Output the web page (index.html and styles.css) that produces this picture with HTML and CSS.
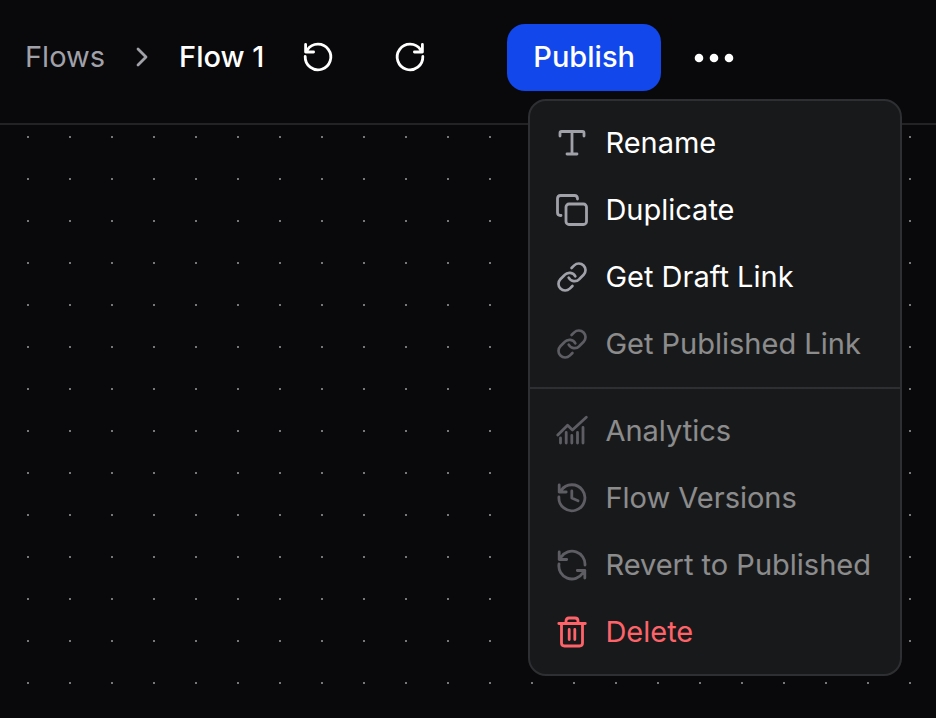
FILE: index.html
```html
<!DOCTYPE html>
<html lang="en">

<head>
  <meta charset="UTF-8">
  <meta name="viewport" content="width=device-width, initial-scale=1.0">
  <title>Flow 1</title>
  <link rel="stylesheet" href="styles.css">
</head>

<body>
  <header class="topbar">
    <nav class="breadcrumb" aria-label="Breadcrumb">
      <a class="crumb" href="#">Flows</a>
      <svg class="chevron" viewBox="0 0 32 32"><path d="M12 8l8 8-8 8"/></svg>
      <a class="crumb crumb-current" href="#" aria-current="page">Flow 1</a>
    </nav>
    <div class="history">
      <button class="icon-btn" type="button" aria-label="Undo">
        <svg class="icon" viewBox="0 0 32 32"><path d="M3.200 15.500a12.800 12.800 0 1 0 2.200-6.700L3.600 11M3.600 3.500V11h8"/></svg>
      </button>
      <button class="icon-btn" type="button" aria-label="Redo">
        <svg class="icon" viewBox="0 0 32 32"><path d="M28.800 15.500a12.800 12.800 0 1 1-2.200-6.700L28.400 11M28.400 3.500V11h-8"/></svg>
      </button>
    </div>
    <button class="publish" type="button">Publish</button>
    <div class="more">
      <button class="more-btn" type="button" aria-label="More" aria-haspopup="menu" aria-expanded="true">
        <svg class="dots" viewBox="0 0 40 10"><circle cx="5" cy="5" r="4.3"/><circle cx="20" cy="5" r="4.3"/><circle cx="35" cy="5" r="4.3"/></svg>
      </button>
      <div class="menu" role="menu">
        <div class="menu-section">
          <button class="menu-item" type="button" role="menuitem">
            <svg class="icon" viewBox="0 0 32 32"><path d="M4 9V6q0-1.500 1.500-1.500h21Q28 4.500 28 6v3M16 4.500V27M11 27h10"/></svg>
            Rename
          </button>
          <button class="menu-item" type="button" role="menuitem">
            <svg class="icon" viewBox="0 0 32 32"><path d="M21.500 5v-.5q0-3-3-3h-14q-3 0-3 3v14q0 3 3 3H5"/><rect x="10" y="10" width="20.500" height="20.500" rx="3"/></svg>
            Duplicate
          </button>
          <button class="menu-item" type="button" role="menuitem">
            <svg class="icon" viewBox="0 0 24 24"><path class="thin" d="M9.500 12.500a5 5 0 0 0 8.040 1.040l3.200-3.200a5 5 0 0 0-7.070-7.070l-2 2M14.500 11.500a5 5 0 0 0-8.040-1.040l-3.200 3.200a5 5 0 0 0 7.070 7.070l2-2"/></svg>
            Get Draft Link
          </button>
          <button class="menu-item" type="button" role="menuitem" disabled>
            <svg class="icon" viewBox="0 0 24 24"><path class="thin" d="M9.500 12.500a5 5 0 0 0 8.040 1.040l3.200-3.200a5 5 0 0 0-7.070-7.070l-2 2M14.500 11.500a5 5 0 0 0-8.040-1.040l-3.200 3.200a5 5 0 0 0 7.070 7.070l2-2"/></svg>
            Get Published Link
          </button>
        </div>
        <div class="menu-section">
          <button class="menu-item" type="button" role="menuitem" disabled>
            <svg class="icon" viewBox="0 0 32 32"><path d="M1.800 20l9.800-9.700 4.800 4.700L30.300 2.300M4.500 23v5M10.200 17.500V28M15.800 20.500V28M21.500 17.500V28M27 12.500V28"/></svg>
            Analytics
          </button>
          <button class="menu-item" type="button" role="menuitem" disabled>
            <svg class="icon" viewBox="0 0 32 32"><path d="M2.900 15a13 13 0 1 0 2.200-6.500L3.200 10M3.200 3v7h7M15.800 9v7l6.200 2.800"/></svg>
            Flow Versions
          </button>
          <button class="menu-item" type="button" role="menuitem" disabled>
            <svg class="icon" viewBox="0 0 32 32"><path d="M3.200 3v7.500h7.500M3.200 10.500l2-2.500A13 13 0 0 1 29 16M28.800 29v-7.500h-7.500M28.800 21.500l-2 2.500A13 13 0 0 1 3 15"/></svg>
            Revert to Published
          </button>
          <button class="menu-item menu-item-danger" type="button" role="menuitem">
            <svg class="icon" viewBox="0 0 32 32"><path d="M2.800 7.500h26.500M5.500 7.500V27q0 3 3 3h15q3 0 3-3V7.500M10 7.500V5q0-3 3-3h6q3 0 3 3v2.500M13.200 13.500v10M18.800 13.500v10"/></svg>
            Delete
          </button>
        </div>
      </div>
    </div>
  </header>
  <main class="canvas"></main>
</body>

</html>
```
FILE: styles.css
```css
* {
  box-sizing: border-box;
}

body {
  display: flex;
  flex-direction: column;
  min-height: 100vh;
  margin: 0;
  font-family: Inter, "Liberation Sans", sans-serif;
  font-size: 29px;
  line-height: 36px;
  color: #fff;
  background: #09090b;
}

button {
  padding: 0;
  font: inherit;
  color: inherit;
  background: none;
  border: 0;
  cursor: pointer;
}

svg {
  display: block;
  flex: none;
  fill: none;
  stroke: currentColor;
  stroke-width: 2.8;
  stroke-linecap: round;
  stroke-linejoin: round;
}

.icon,
.chevron {
  width: 32px;
  height: 32px;
}

.thin {
  stroke-width: 2;
}

.topbar {
  display: flex;
  align-items: center;
  padding: 24px 25px 32px;
  border-bottom: 2px solid #232326;
}

.breadcrumb,
.history {
  display: flex;
  align-items: center;
  padding-bottom: 2px;
}

.breadcrumb {
  gap: 21px;
}

.crumb {
  color: #a1a1aa;
  text-decoration: none;
}

.crumb-current {
  font-weight: 500;
  color: #fff;
}

.chevron {
  color: #a1a1aa;
}

.history {
  gap: 60px;
  margin: 0 81px 0 38px;
}

.publish {
  height: 67px;
  padding: 0 26px 2px;
  font-weight: 500;
  background: #1247eb;
  border-radius: 18px;
}

.more {
  position: relative;
  margin-left: 19px;
}

.more-btn {
  display: flex;
  align-items: center;
  justify-content: center;
  width: 68px;
  height: 67px;
}

.dots {
  width: 40px;
  height: 10px;
  fill: currentColor;
  stroke: none;
}

.menu {
  position: absolute;
  top: 75px;
  right: -154px;
  background: #18191b;
  border: 2px solid #2e2f32;
  border-radius: 18px;
}

.menu-section {
  padding: 8px 0 10px;
}

.menu-section + .menu-section {
  padding-bottom: 9px;
  border-top: 2px solid #2e2f32;
}

.menu-item {
  display: flex;
  align-items: center;
  gap: 17px;
  width: 100%;
  height: 67px;
  padding: 0 29px 0 26px;
  white-space: nowrap;
}

.menu-item .icon {
  color: #a1a1aa;
}

.menu-item:disabled {
  opacity: .5;
  cursor: default;
}

.menu-item-danger,
.menu-item-danger .icon {
  color: #ff6369;
}

/* dotted grid, one dot every 42px */
.canvas {
  flex: 1;
  background-image: radial-gradient(circle at 28px 12px, #77777a 1px, transparent 1.500px);
  background-size: 42px 42px;
}
```
